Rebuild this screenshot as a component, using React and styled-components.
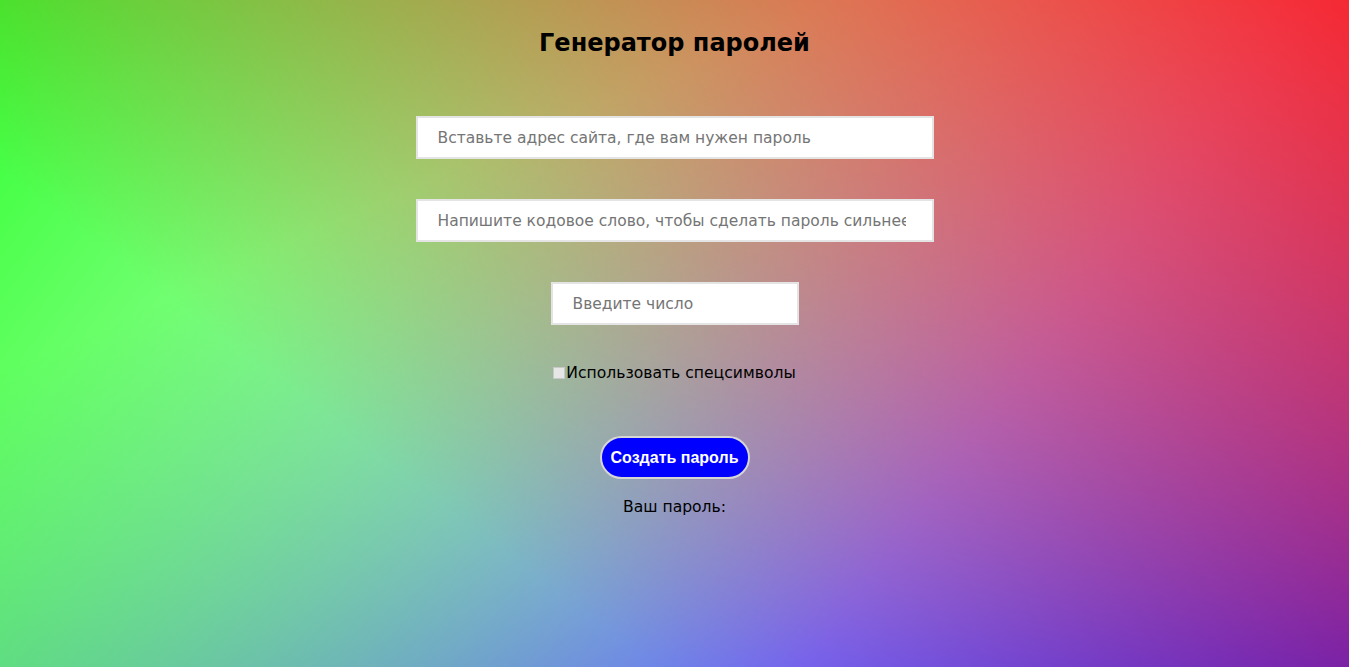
import React from 'react';
import styled, { createGlobalStyle } from 'styled-components';

const GlobalStyle = createGlobalStyle`
  html, body {
    margin: 0;
    padding: 0;
  }
  body {
    font-family: 'DejaVu Sans', Verdana, sans-serif;
    background: #fff;
  }
`

const Page = styled.div`
  width: 1349px;
  min-height: 667px;
  box-sizing: border-box;
  padding-top: 26px;
  display: flex;
  flex-direction: column;
  align-items: center;
  background:
    linear-gradient(217deg, rgba(255, 0, 0, 0.8), rgba(255, 0, 0, 0) 70.71%),
    linear-gradient(127deg, rgba(0, 255, 0, 0.8), rgba(0, 255, 0, 0) 70.71%),
    linear-gradient(336deg, rgba(0, 0, 255, 0.8), rgba(0, 0, 255, 0) 70.71%);
`

const Title = styled.h1`
  margin: 0 0 56px;
  font-family: 'DejaVu Sans', Verdana, sans-serif;
  font-size: 24px;
  font-weight: bold;
  color: #000;
  line-height: 34px;
`

const Field = styled.input`
  width: ${p => p.$w}px;
  height: 43px;
  box-sizing: border-box;
  margin-bottom: 40px;
  padding: 0 26px 0 20px;
  border: 2px solid #e4e4e4;
  background: #fff;
  font-family: 'DejaVu Sans', Verdana, sans-serif;
  font-size: 15.5px;
  color: #000;
  outline: none;
  &::placeholder {
    color: #757575;
  }
`

const CheckRow = styled.label`
  display: flex;
  align-items: center;
  margin-top: -2px;
  font-family: 'DejaVu Sans', Verdana, sans-serif;
  font-size: 15.6px;
  color: #000;
  line-height: 20px;
  input {
    appearance: none;
    margin: 0 1px 0 0;
    width: 12px;
    height: 12px;
    box-sizing: border-box;
    border: 1px solid #c8c8c8;
    background: #e6e6e6;
  }
`

const Button = styled.button`
  margin-top: 53px;
  width: 150px;
  height: 43px;
  border: 2px solid #d6d6d6;
  border-radius: 22px;
  background: #0000ff;
  color: #fff;
  font-family: 'Liberation Sans', Arial, sans-serif;
  font-size: 16px;
  font-weight: bold;
  padding: 0;
  cursor: pointer;
`

const Result = styled.p`
  margin: 18px 0 0;
  font-family: 'DejaVu Sans', Verdana, sans-serif;
  font-size: 15.6px;
  color: #000;
  line-height: 20px;
`

const App = () => {
  return (
    <Page>
      <GlobalStyle />
      <Title>Генератор паролей</Title>
      <Field $w={518} type='text' placeholder='Вставьте адрес сайта, где вам нужен пароль' />
      <Field $w={518} type='text' placeholder='Напишите кодовое слово, чтобы сделать пароль сильнее' />
      <Field $w={248} type='number' placeholder='Введите число' />
      <CheckRow>
        <input type='checkbox' />
        Использовать спецсимволы
      </CheckRow>
      <Button>Создать пароль</Button>
      <Result>Ваш пароль:</Result>
    </Page>
  )
}

export default App
